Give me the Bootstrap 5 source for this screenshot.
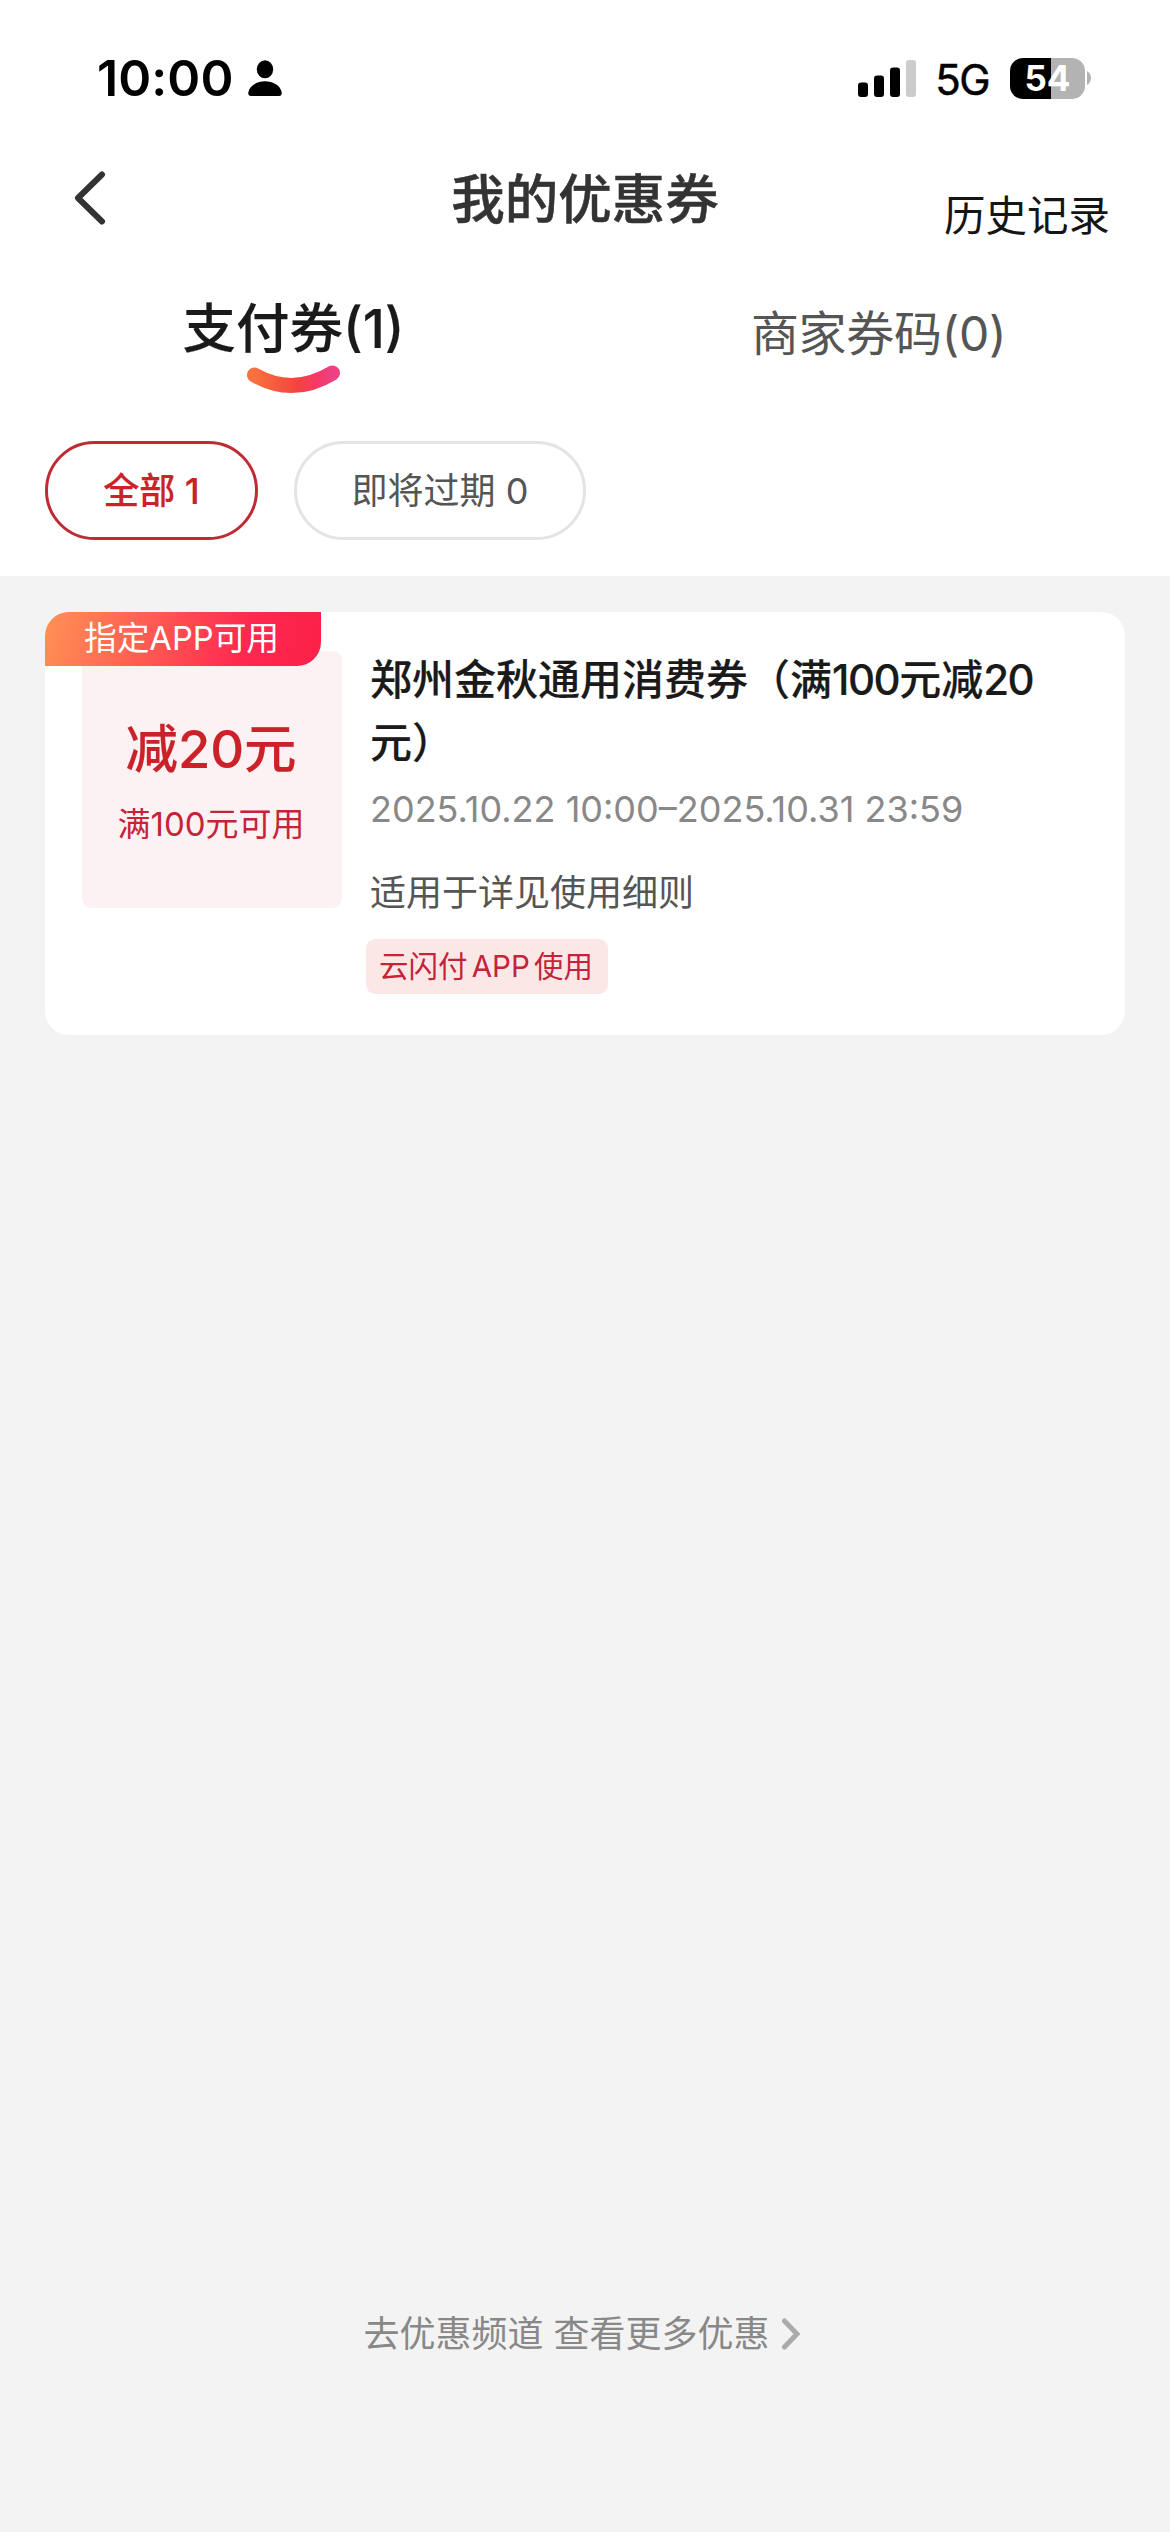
<!DOCTYPE html>
<html lang="zh-CN">
<head>
<meta charset="utf-8">
<meta name="viewport" content="width=device-width, initial-scale=1">
<title>我的优惠券</title>
<link href="https://cdn.jsdelivr.net/npm/bootstrap@5.3.0/dist/css/bootstrap.min.css" rel="stylesheet">
<style>
body{font-family:Inter,"Noto Sans CJK SC",sans-serif;background:#f3f3f3;color:#1a1a1a;width:1170px;height:2532px;overflow:hidden}
.t{line-height:1;white-space:nowrap}
.status-bar{height:156px;padding:0 79px 0 97px}
.clock{font-size:50px;font-weight:600;letter-spacing:.1px;color:#000}
.person{margin-left:14px}
.net{font-size:42px;color:#000;font-weight:400;-webkit-text-stroke:.5px #000;letter-spacing:-1.5px;margin:3px 21px 0 19px}
.battery{width:75px;height:41px;border-radius:13px;background:linear-gradient(90deg,#000 41px,#b3b3b3 41px);color:#fff;font-size:35px;font-weight:700}
.battery-tip{margin-left:2px}
.nav-head{height:84px;padding:0 60px 0 73px}
.nav-head>*{flex:1 1 0}
.head-title{font-size:53.5px;color:#333;padding:3px 13px 0 0}
.semi{font-weight:500;-webkit-text-stroke:.15px currentColor}
.head-title.semi{-webkit-text-stroke-width:.5px}
.history{font-size:41.5px;color:#151515;padding-top:37px}
.tab-row{height:201px}
.tab-on{font-size:53.5px;padding:62px 0 0 2px}
.smile{margin-top:8px}
.tab-off{font-size:48px;color:#555;padding:70px 0 0 2px;letter-spacing:-.3px}
.pills{padding:0 45px 36px;gap:36px}
.pill{height:99px;border:3px solid #e4e4e4;border-radius:50px;font-size:36px;color:#555;background:#fff}
.pill.on{border-color:#c02a34;color:#cb2229}
.coupon{margin:36px 45px 0;height:423px;border:0;border-radius:24px;padding:39px 37px 0}
.ribbon{left:0;top:0;width:276px;height:54px;border-radius:24px 0 24px 0;background:linear-gradient(105deg,#ff9255,#ff2850 72%,#fb2148);color:#fff;font-size:32.7px;padding:0 3px 2px 0}
.face{width:260px;height:257px;border-radius:9px;background:#fdf2f3;color:#cb2229;padding:72px 2px 0 0}
.amount{font-size:52.5px}
.cond{font-size:33px;margin-top:32px;color:#c42338}
.info{padding-left:28px;width:730px}
.c-title{font-size:42px;line-height:63px;margin-top:-3px}
.c-title .num{letter-spacing:-1.5px}
.dates{font-size:36px;color:#888;margin-top:17px;letter-spacing:0}
.scope{font-size:36px;color:#555;margin-top:48px}
.app-tag{width:242px;height:55px;margin:28px 0 0 -4px;border-radius:9px;background:#fce7e7;color:#c42338;font-size:29.5px;word-spacing:-4px;padding-right:2px}
.more{font-size:36px;color:#888;margin-top:1281px;padding-right:7px;gap:12px}
</style>
</head>
<body>
<header class="bg-white">
  <div class="status-bar d-flex align-items-center">
    <span class="t clock">10:00</span>
    <svg class="person" width="34" height="37" viewBox="0 0 34 37"><ellipse cx="17" cy="9.3" rx="8.2" ry="9"/><path d="M3 36Q0 36 .3 32.500C1.500 25.500 9 21.300 17 21.300S32.500 25.500 33.700 32.500Q34 36 31 36Z"/></svg>
    <div class="d-flex align-items-center ms-auto">
      <svg width="58" height="37" viewBox="0 0 58 37"><rect y="22.500" width="10" height="14.500" rx="3"/><rect x="16" y="15.500" width="10" height="21.500" rx="3"/><rect x="32" y="7.500" width="10" height="29.500" rx="3"/><rect x="48" width="10" height="37" rx="3" fill="#ccc"/></svg>
      <span class="t net">5G</span>
      <span class="battery t d-flex align-items-center justify-content-center">54</span>
      <svg class="battery-tip" width="4" height="14" viewBox="0 0 4 14"><path d="M0 0Q4 2.500 4 7T0 14Z" fill="#b3b3b3"/></svg>
    </div>
  </div>
  <nav class="nav-head d-flex align-items-center">
    <div class="d-flex"><svg width="34" height="54" viewBox="0 0 34 54"><path d="M29 3.500L5 27L29 50.500" fill="none" stroke="#333" stroke-width="6" stroke-linecap="round" stroke-linejoin="round"/></svg></div>
    <span class="t head-title semi text-center">我的优惠券</span>
    <span class="t history text-end">历史记录</span>
  </nav>
  <div class="tab-row row g-0">
    <div class="col-6 d-flex flex-column align-items-center">
      <span class="t tab-on semi">支付券(1)</span>
      <svg class="smile" width="96" height="32" viewBox="0 0 96 32"><defs><linearGradient id="g" x1="0" x2="1" y1="0" y2="0"><stop stop-color="#f9713f"/><stop offset=".55" stop-color="#f2443f"/><stop offset=".8" stop-color="#f73868"/><stop offset="1" stop-color="#ec4283"/></linearGradient></defs><path d="M9.500 11Q48 33 87.500 9" fill="none" stroke="url(#g)" stroke-width="15" stroke-linecap="round"/></svg>
    </div>
    <div class="col-6 d-flex justify-content-center align-items-start"><span class="t tab-off">商家券码(0)</span></div>
  </div>
  <div class="pills d-flex">
    <span class="pill on t semi d-flex align-items-center justify-content-center" style="width:213px">全部 1</span>
    <span class="pill t d-flex align-items-center justify-content-center" style="width:292px">即将过期 0</span>
  </div>
</header>
<main>
  <article class="card coupon position-relative flex-row">
    <div class="face d-flex flex-column align-items-center flex-shrink-0">
      <span class="t amount semi">减20元</span>
      <span class="t cond">满100元可用</span>
    </div>
    <div class="info">
      <div class="c-title semi">郑州金秋通用消费券（满<span class="num">100</span>元减<span class="num">20</span>元）</div>
      <div class="t dates">2025.10.22 10:00–2025.10.31 23:59</div>
      <div class="t scope">适用于详见使用细则</div>
      <div class="app-tag t d-flex align-items-center justify-content-center">云闪付 APP 使用</div>
    </div>
    <span class="ribbon t position-absolute d-flex align-items-center justify-content-center">指定APP可用</span>
  </article>
  <div class="more d-flex align-items-center justify-content-center">
    <span class="t">去优惠频道 查看更多优惠</span>
    <svg width="18" height="32" viewBox="0 0 18 32"><path d="M2.500 3L15 16L2.500 29" fill="none" stroke="#aaa" stroke-width="5" stroke-linecap="round"/></svg>
  </div>
</main>
<script src="https://cdn.jsdelivr.net/npm/bootstrap@5.3.0/dist/js/bootstrap.bundle.min.js"></script>
</body>
</html>
